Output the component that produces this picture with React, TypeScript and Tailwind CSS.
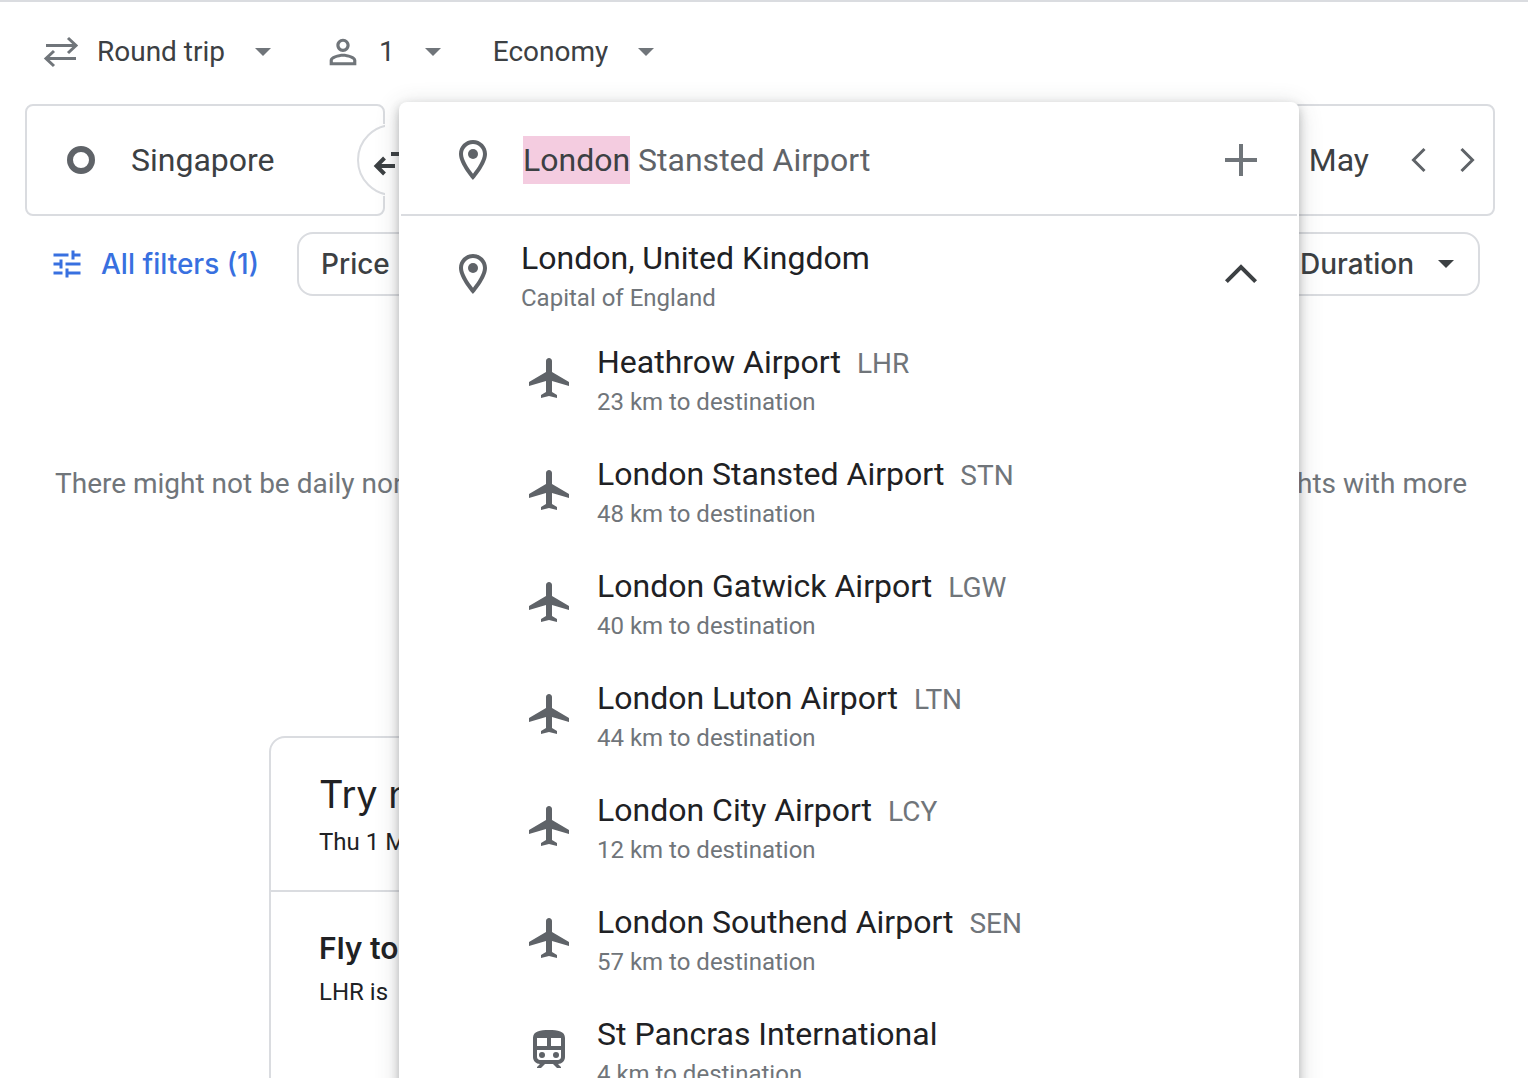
import React, { useState } from 'react';

interface Place {
  name: string;
  code?: string;
  distance: string;
  kind: 'airport' | 'station';
}

const PLACES: Place[] = [
  { name: 'Heathrow Airport', code: 'LHR', distance: '23 km to destination', kind: 'airport' },
  { name: 'London Stansted Airport', code: 'STN', distance: '48 km to destination', kind: 'airport' },
  { name: 'London Gatwick Airport', code: 'LGW', distance: '40 km to destination', kind: 'airport' },
  { name: 'London Luton Airport', code: 'LTN', distance: '44 km to destination', kind: 'airport' },
  { name: 'London City Airport', code: 'LCY', distance: '12 km to destination', kind: 'airport' },
  { name: 'London Southend Airport', code: 'SEN', distance: '57 km to destination', kind: 'airport' },
  { name: 'St Pancras International', distance: '4 km to destination', kind: 'station' },
];

const PinIcon = () => (
  <svg className="size-12 shrink-0 text-[#5f6368]" viewBox="0 0 24 24" fill="currentColor" aria-hidden="true">
    <path d="M12 2C8.13 2 5 5.13 5 9c0 5.25 7 13 7 13s7-7.75 7-13c0-3.87-3.13-7-7-7zM7 9c0-2.76 2.24-5 5-5s5 2.24 5 5c0 2.88-2.88 7.19-5 9.88C9.92 16.21 7 11.85 7 9z" />
    <circle cx="12" cy="9" r="2.5" />
  </svg>
);

const PlaneIcon = () => (
  <svg className="size-12 shrink-0 text-[#5f6368]" viewBox="0 0 24 24" fill="currentColor" aria-hidden="true">
    <path d="M22 16v-2l-8.5-5V3.5c0-.83-.67-1.5-1.5-1.5s-1.5.67-1.5 1.5V9L2 14v2l8.5-2.5V19L8 20.5V22l4-1 4 1v-1.5L13.5 19v-5.5L22 16z" />
  </svg>
);

const TrainIcon = () => (
  <svg className="size-12 shrink-0 text-[#5f6368]" viewBox="0 0 24 24" fill="currentColor" aria-hidden="true">
    <path
      fillRule="evenodd"
      d="M12 2c-4.42 0-8 .5-8 4v9.5C4 17.43 5.57 19 7.5 19L6 20.5v.5h2l2-2h4l2 2h2v-.5L16.5 19c1.93 0 3.5-1.57 3.5-3.5V6c0-3.5-3.58-4-8-4zM6 6h5v4H6zM13 6h5v4h-5zM6 12h12v3.5c0 .83-.67 1.5-1.5 1.5h-9c-.83 0-1.5-.67-1.5-1.5z"
    />
    <circle cx="8.5" cy="14.5" r="1.5" />
    <circle cx="15.5" cy="14.5" r="1.5" />
  </svg>
);

const Caret = ({ className }: { className: string }) => (
  <svg className={className} viewBox="0 0 16 8" fill="currentColor" aria-hidden="true">
    <path d="M0 0h16L8 8z" />
  </svg>
);

interface TripSelectProps {
  label: string;
  options: string[];
  icon?: React.ReactNode;
  className?: string;
}

const TripSelect: React.FC<TripSelectProps> = ({ label, options, icon, className }) => (
  <label className={className}>
    {icon}
    <select
      aria-label={label}
      className="appearance-none field-sizing-content bg-transparent text-[28px] leading-10 text-[#3c4043] outline-none"
    >
      {options.map((option) => (
        <option key={option}>{option}</option>
      ))}
    </select>
    <Caret className="ml-[30px] h-2 w-4 text-[#70757a]" />
  </label>
);

const App: React.FC = () => {
  const [origin, setOrigin] = useState('Singapore');
  const [query, setQuery] = useState('London');
  const [expanded, setExpanded] = useState(true);

  return (
    <div className="h-screen overflow-hidden border-t-2 border-[#dadce0] bg-white font-[Roboto,sans-serif] text-[#202124]">
      {/* Trip options */}
      <div className="flex h-[100px] items-center pl-[43px]">
        <TripSelect
          label="Trip type"
          options={['Round trip', 'One way', 'Multi-city']}
          className="flex items-center"
          icon={
            <svg className="mr-[18px] size-9 text-[#70757a]" viewBox="0 0 36 36" fill="none" stroke="currentColor" strokeWidth="3" aria-hidden="true">
              <path d="M3 11.5h29M25 4l8 7.5-8 7.5M33 24.5H4M11 17l-8 7.5 8 7.5" />
            </svg>
          }
        />
        <TripSelect
          label="Passengers"
          options={['1', '2', '3', '4']}
          className="ml-[52px] flex items-center"
          icon={
            <svg className="mr-4 size-10 text-[#70757a]" viewBox="0 0 24 24" fill="currentColor" aria-hidden="true">
              <path d="M12 5.9c1.16 0 2.1.94 2.1 2.1s-.94 2.1-2.1 2.1S9.9 9.16 9.9 8s.94-2.1 2.1-2.1m0 9c2.97 0 6.1 1.46 6.1 2.1v1.1H5.9V17c0-.64 3.13-2.1 6.1-2.1M12 4C9.79 4 8 5.79 8 8s1.79 4 4 4 4-1.79 4-4-1.79-4-4-4zm0 9c-2.67 0-8 1.34-8 4v3h16v-3c0-2.66-5.33-4-8-4z" />
            </svg>
          }
        />
        <TripSelect
          label="Cabin class"
          options={['Economy', 'Business', 'First']}
          className="ml-[52px] flex items-center"
        />
      </div>

      {/* Search fields */}
      <div className="relative mt-0.5 mr-[33px] ml-[25px] flex gap-4">
        <div className="relative flex h-28 w-[360px] shrink-0 items-center rounded-lg border-2 border-[#dadce0] pl-10">
          <span className="mr-9 size-7 rounded-full border-6 border-[#5f6368]" />
          <input
            aria-label="Where from?"
            value={origin}
            onChange={(e) => setOrigin(e.target.value)}
            className="w-48 text-[32px] leading-10 text-[#3c4043] outline-none"
          />
          <div className="absolute top-[18px] -right-0.5 h-[72px] w-7 overflow-hidden bg-white">
            <div className="size-[72px] rounded-full border-2 border-[#dadce0]" />
          </div>
          <button type="button" aria-label="Swap origin and destination" className="absolute top-[34px] -right-[30px] text-[#3c4043]">
            <svg className="size-10" viewBox="0 0 40 40" fill="none" stroke="currentColor" strokeWidth="4" aria-hidden="true">
              <path d="M22 26H4M11.500 18l-8 8 8 8M18 14h19M29.500 6l8 8-8 8" />
            </svg>
          </button>
        </div>

        <div className="flex h-28 flex-1 items-center justify-end rounded-lg border-2 border-[#dadce0] pr-0.5">
          <input
            aria-label="Departure date"
            defaultValue="May"
            className="mr-[26px] field-sizing-content text-[32px] leading-10 text-[#3c4043] outline-none"
          />
          <button type="button" aria-label="Earlier date">
            <svg className="size-12 text-[#5f6368]" viewBox="0 0 48 48" fill="none" stroke="currentColor" strokeWidth="3" aria-hidden="true">
              <path d="M29.500 13 18.500 24l11 11" />
            </svg>
          </button>
          <button type="button" aria-label="Later date">
            <svg className="size-12 text-[#5f6368]" viewBox="0 0 48 48" fill="none" stroke="currentColor" strokeWidth="3" aria-hidden="true">
              <path d="M18.500 13l11 11-11 11" />
            </svg>
          </button>
        </div>

        {/* Destination popup */}
        <div className="absolute -top-0.5 left-[374px] z-10 w-[900px] rounded-lg bg-white px-0.5 pt-0.5 shadow-[0_4px_10px_rgba(60,64,67,0.3),0_4px_24px_rgba(60,64,67,0.2)]">
          <div className="flex items-center border-b-2 border-[#dadce0] pt-8 pr-8 pb-[30px] pl-12">
            <PinIcon />
            <input
              aria-label="Where to?"
              value={query}
              onChange={(e) => setQuery(e.target.value)}
              className="ml-[26px] h-12 field-sizing-content bg-[#f4cce0] text-[32px] text-[#3c4043] outline-none"
            />
            <span className="text-[32px] leading-10 whitespace-pre text-[#5f6368]"> Stansted Airport</span>
            <button type="button" aria-label="Add destination" className="ml-auto">
              <svg className="size-12 text-[#70757a]" viewBox="0 0 24 24" fill="none" stroke="currentColor" strokeWidth="2" aria-hidden="true">
                <path d="M12 4v16M4 12h16" />
              </svg>
            </button>
          </div>

          <div className="flex items-start pt-[22px] pr-8 pl-12">
            <div className="pt-3">
              <PinIcon />
            </div>
            <div className="ml-6">
              <p className="text-[32px] leading-10">London, United Kingdom</p>
              <p className="text-2xl leading-10 text-[#70757a]">Capital of England</p>
            </div>
            <button
              type="button"
              aria-label="Toggle nearby airports"
              aria-expanded={expanded}
              onClick={() => setExpanded(!expanded)}
              className="mt-3 ml-auto"
            >
              <svg className="size-12 text-[#3c4043]" viewBox="0 0 24 24" fill="none" stroke="currentColor" strokeWidth="2" aria-hidden="true">
                <path d="M4.700 15.800 12 8.500l7.300 7.300" />
              </svg>
            </button>
          </div>

          {expanded && (
            <ul className="mt-6 flex flex-col gap-8 pb-8 pl-[124px]">
              {PLACES.map((place) => (
                <li key={place.name} className="flex items-start gap-6">
                  <div className="pt-3">{place.kind === 'airport' ? <PlaneIcon /> : <TrainIcon />}</div>
                  <div>
                    <div className="flex h-10 items-baseline gap-4 leading-10">
                      <span className="text-[32px]">{place.name}</span>
                      {place.code && <span className="text-[28px] text-[#70757a]">{place.code}</span>}
                    </div>
                    <p className="text-2xl leading-10 text-[#70757a]">{place.distance}</p>
                  </div>
                </li>
              ))}
            </ul>
          )}
        </div>
      </div>

      {/* Filters */}
      <div className="mt-4 mr-12 ml-[49px] flex items-center font-[Inter,sans-serif] text-[28px] leading-10 font-medium">
        <button type="button" className="flex items-center gap-4 text-[#3870e0]">
          <svg className="size-9" viewBox="0 0 24 24" fill="currentColor" aria-hidden="true">
            <path d="M3 17v2h6v-2H3zM3 5v2h10V5H3zm10 16v-2h8v-2h-8v-2h-2v6h2zM7 9v2H3v2h4v2h2V9H7zm14 4v-2H11v2h10zm-6-4h2V7h4V5h-4V3h-2v6z" />
          </svg>
          All filters (1)
        </button>
        <button type="button" className="ml-[38px] flex h-16 items-center gap-6 rounded-2xl border-2 border-[#dadce0] px-[22px] text-[#3c4043]">
          Price
          <Caret className="h-2 w-4" />
        </button>
        <button type="button" className="ml-auto flex h-16 items-center gap-6 rounded-2xl border-2 border-[#dadce0] px-6 text-[#3c4043]">
          Duration
          <Caret className="h-2 w-4" />
        </button>
      </div>

      <div className="mt-[168px] mr-[61px] ml-[55px] flex justify-between text-[28px] leading-10 text-[#70757a]">
        <p>There might not be daily nonstop</p>
        <p>flights with more</p>
      </div>

      {/* Nearby airports card */}
      <div className="mx-auto mt-[232px] h-[600px] max-w-[990px] rounded-2xl border-2 border-[#dadce0]">
        <div className="h-[154px] border-b-2 border-[#dadce0] px-12 pt-8">
          <h2 className="font-[Inter,sans-serif] text-[38px] leading-12">Try nearby</h2>
          <p className="text-2xl leading-12">Thu 1 May</p>
        </div>
        <div className="px-12 pt-8">
          <h3 className="font-[Inter,sans-serif] text-3xl leading-12 font-semibold">Fly to London</h3>
          <p className="text-2xl leading-10">LHR is</p>
        </div>
      </div>
    </div>
  );
};

export default App;
